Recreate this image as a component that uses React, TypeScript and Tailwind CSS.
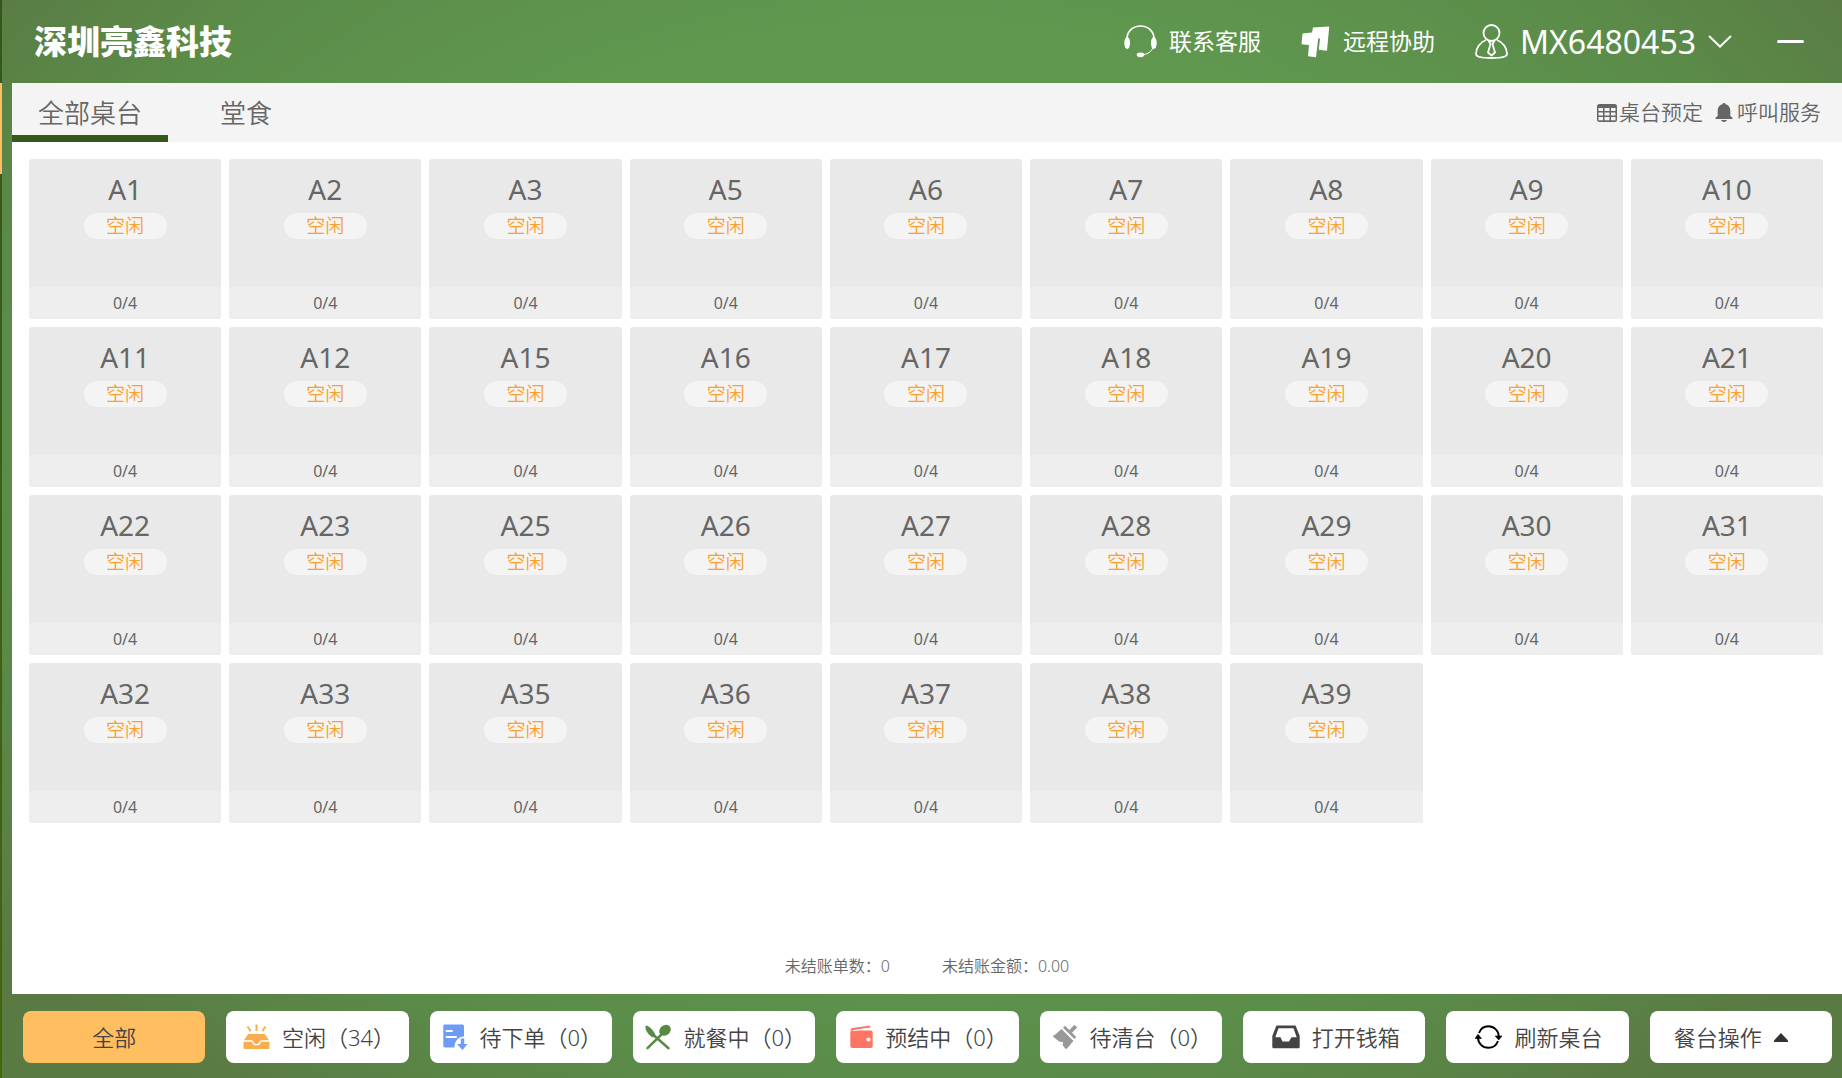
import React from 'react';

const tables = [
  'A1', 'A2', 'A3', 'A5', 'A6', 'A7', 'A8', 'A9', 'A10',
  'A11', 'A12', 'A15', 'A16', 'A17', 'A18', 'A19', 'A20', 'A21',
  'A22', 'A23', 'A25', 'A26', 'A27', 'A28', 'A29', 'A30', 'A31',
  'A32', 'A33', 'A35', 'A36', 'A37', 'A38', 'A39',
];

function HeadsetIcon() {
  return (
    <svg width="33" height="33" viewBox="0 0 33 33" fill="none" aria-hidden="true">
      <path d="M3 13C3.5 6 9 1 16.500 1S29.500 6 30 13" stroke="white" strokeWidth="1.700" />
      <ellipse cx="3.200" cy="18" rx="2.900" ry="6" fill="white" />
      <ellipse cx="29.800" cy="18" rx="2.900" ry="6" fill="white" />
      <path d="M29 23C27 27 24 29 19 29.800" stroke="white" strokeWidth="1" />
      <ellipse cx="16.500" cy="29.800" rx="3.800" ry="2.400" fill="white" />
    </svg>
  );
}

function RemoteIcon() {
  return (
    <svg width="29" height="32" viewBox="0 0 29 32" fill="white" aria-hidden="true">
      <path d="M1.500 7.500 11 6.500 12 1.500 28 .500 28.200 1 26 24.800 17.800 23.800 19 12.500 17.200 12.500 15 31.200 7 30.200 8 19 .5 18.300Z" />
    </svg>
  );
}

function UserIcon() {
  return (
    <svg width="33" height="35" viewBox="0 0 33 35" fill="none" stroke="white" strokeWidth="1.800" strokeLinejoin="round" aria-hidden="true">
      <circle cx="16.500" cy="9" r="8" />
      <path d="M11 16C5 18 1 24 1 30c0 3 7 4 15.500 4S32 33 32 30c0-6-4-12-10-14" />
      <path d="M13.500 16.500 15.500 20 13 28.500 16.500 31.500 20 28.500 17.500 20 19.500 16.500" />
    </svg>
  );
}

function GridIcon() {
  return (
    <svg width="20" height="18" viewBox="0 0 20 18" aria-hidden="true">
      <rect width="20" height="18" rx="2.500" fill="#666" />
      <g fill="#f4f4f4">
        <rect x="1.500" y="4" width="4.500" height="3" />
        <rect x="7.500" y="4" width="5" height="3" />
        <rect x="14" y="4" width="4.500" height="3" />
        <rect x="1.500" y="8.500" width="4.500" height="3" />
        <rect x="7.500" y="8.500" width="5" height="3" />
        <rect x="14" y="8.500" width="4.500" height="3" />
        <rect x="1.500" y="13" width="4.500" height="3.300" />
        <rect x="7.500" y="13" width="5" height="3.300" />
        <rect x="14" y="13" width="4.500" height="3.300" />
      </g>
    </svg>
  );
}

function BellIcon() {
  return (
    <svg width="18" height="19" viewBox="0 0 18 19" fill="#666" aria-hidden="true">
      <path d="M9 0c.9 0 1.500.6 1.600 1.300C13.500 2 15.300 4.400 15.300 7.500V13l2 1.500c.6.500.4 1.500-.4 1.500H1.100C.3 16 .1 15 .7 14.500l2-1.500V7.500C2.700 4.400 4.500 2 7.400 1.300 7.500.6 8.100 0 9 0Z" />
      <path d="M6 17h6c-.5 1.200-1.600 2-3 2s-2.500-.8-3-2Z" />
    </svg>
  );
}

function IdleIcon() {
  return (
    <svg width="27" height="26" viewBox="0 0 27 26" aria-hidden="true">
      <g stroke="#f8ae4f" strokeWidth="2">
        <path d="M13.500.500V7M4.500 2.500 7.700 7.200M22.500 2.500 19.300 7.200" />
      </g>
      <path d="M6.500 10h14c1 0 1.600.4 2.200 1.300l3.300 5c.5.700.5 1 .5 1.700v5.500c0 1-.6 1.500-1.500 1.500H2c-.9 0-1.500-.5-1.500-1.500V18c0-.7 0-1 .5-1.700l3.300-5C4.900 10.400 5.500 10 6.500 10Z" fill="#f8ae4f" />
      <path d="M0 17h8.700c.6 0 1 .4 1.100 1 .3 1.500 1.700 2.700 3.700 2.700s3.400-1.200 3.700-2.700c.1-.6.5-1 1.100-1H27" fill="none" stroke="white" strokeWidth="1.300" />
    </svg>
  );
}

function OrderIcon() {
  return (
    <svg width="25" height="26" viewBox="0 0 25 26" aria-hidden="true">
      <path d="M2 .5h17c1.400 0 2 .6 2 2v10C15.500 12.500 11.500 17 11.500 23.500H2C.9 23.500.3 22.900.3 21.800V2.200C.3 1.100.9.500 2 .5Z" fill="#6d9bf6" />
      <path d="M3.500 7H9M3.500 13H13" stroke="white" strokeWidth="2" strokeLinecap="round" />
      <path d="M17.800 14.500h3.400V20H24.500L19.500 26 14 20h3.800Z" fill="#6d9bf6" />
    </svg>
  );
}

function DiningIcon() {
  return (
    <svg width="26" height="26" viewBox="0 0 26 26" fill="#588a45" aria-hidden="true">
      <path d="M1 1.500C4 1.500 9 7 10.500 11L8 13.500C3 11 0 6 .5 2Z" />
      <path d="M9 11.500 23.500 24.200" stroke="#588a45" strokeWidth="2.500" strokeLinecap="round" />
      <path d="M2.500 24.200 17 10" stroke="#588a45" strokeWidth="2.500" strokeLinecap="round" />
      <ellipse cx="20" cy="6.300" rx="6.200" ry="5" transform="rotate(-38 20 6.300)" />
    </svg>
  );
}

function WalletIcon() {
  return (
    <svg width="23" height="24" viewBox="0 0 23 24" aria-hidden="true">
      <path d="M.3 5.500C.3 4 1.200 3.200 2.600 3L18.700.8c1.300-.2 1.900.3 1.900 1.500v.4L3 5.400Z" fill="#fe7566" />
      <rect x=".3" y="5.500" width="22.400" height="17.500" rx="2" fill="#fe7566" />
      <circle cx="18.500" cy="14.500" r="2.100" fill="white" />
      <path d="M3 5.600 20.800 2.900" stroke="white" strokeWidth=".9" />
    </svg>
  );
}

function CleanIcon() {
  return (
    <svg width="25" height="26" viewBox="0 0 25 26" fill="#999" aria-hidden="true">
      <path d="M.2 11.500C3.500 10.500 5 7.500 8.500 5L20.500 17c-2.500 2.200-4 5-6.500 7.500-.8.700-1.400.4-2-.3L9.800 21.500 10 18 6.500 17.800.2 12.800Z" />
      <path d="m10 3.700 2-2 4.300 4.300L21.500.8l2.700 2.700L19 8.700l4.300 4.200-2 2.200Z" />
    </svg>
  );
}

function DrawerIcon() {
  return (
    <svg width="28" height="24" viewBox="0 0 28 24" fillRule="evenodd" fill="#444" aria-hidden="true">
      <path d="M5.500.5h17c.8 0 1.200.3 1.500 1l3.700 9.500v10.500c0 1.300-.5 1.800-1.700 1.800H2c-1.200 0-1.700-.5-1.700-1.800V11L4 1.500c.3-.7.7-1 1.500-1ZM6.500 3.300 3.300 12.300H8.500L10.500 16.500h6.500L19.500 12.300H24.700L21.500 3.300Z" />
    </svg>
  );
}

function RefreshIcon() {
  return (
    <svg width="27" height="24" viewBox="0 0 27 24" aria-hidden="true">
      <path d="M4 8C5.500 3.800 9 1.200 13.300 1.200 19 1.200 23.600 5.500 23.800 11.500M23 16c-1.500 4.200-5.400 6.800-9.700 6.800C7.500 22.800 3 18.500 3 12.500" fill="none" stroke="black" strokeWidth="1.900" />
      <path d="M20.200 11H27L23.700 15Z M0 13.500H6.500L3 9.300Z" fill="black" stroke="black" strokeWidth=".6" />
    </svg>
  );
}

const actions = [
  { label: '空闲（34）', icon: <IdleIcon /> },
  { label: '待下单（0）', icon: <OrderIcon /> },
  { label: '就餐中（0）', icon: <DiningIcon /> },
  { label: '预结中（0）', icon: <WalletIcon /> },
  { label: '待清台（0）', icon: <CleanIcon /> },
  { label: '打开钱箱', icon: <DrawerIcon /> },
  { label: '刷新桌台', icon: <RefreshIcon /> },
];

function TableCard({ name }: { name: string }) {
  return (
    <button className="flex h-40 flex-col items-center overflow-hidden rounded-[3px] bg-[#e9e9e9] text-[#666]">
      <span className="mt-[11px] text-[28px] leading-[38px]">{name}</span>
      <span className="mt-[5px] flex h-[26px] w-[83px] items-center justify-center rounded-full bg-[#f4f4f4] text-[19px] leading-[26px] font-[350] text-[#f8a030]">
        空闲
      </span>
      <span className="mt-auto h-8 w-full bg-[#eee] text-center text-base leading-8">0/4</span>
    </button>
  );
}

export default function App() {
  return (
    <div className="flex min-h-screen bg-[radial-gradient(ellipse_at_50%_42%,#60a052_0%,#5f974f_50%,#5b8b49_72%,#5a7a43_90%)] font-['Noto_Sans','Noto_Sans_CJK_SC',sans-serif]">
      <aside className="flex w-[2px] shrink-0 flex-col bg-linear-to-b from-[#34581c] to-[#426808]">
        <div className="mt-[83px] h-[91px] bg-[#ffbe60]" />
      </aside>
      <div className="flex min-w-0 flex-1 flex-col">
        <header className="flex h-[83px] items-center justify-between pr-[38px] pl-8 text-white">
          <h1 className="text-[33px] leading-[44px] font-black">深圳亮鑫科技</h1>
          <div className="flex items-center">
            <button className="flex items-center gap-3 text-[23px]">
              <HeadsetIcon />
              联系客服
            </button>
            <button className="ml-10 flex items-center gap-[13px] text-[23px]">
              <RemoteIcon />
              远程协助
            </button>
            <button className="ml-10 flex items-center gap-3 text-[32px] leading-[44px]">
              <UserIcon />
              MX6480453
              <svg width="24" height="13" viewBox="0 0 24 13" fill="none" stroke="white" strokeWidth="2" aria-hidden="true">
                <path d="M1 1 12 11.500 23 1" />
              </svg>
            </button>
            <button aria-label="最小化" className="ml-[45px] flex h-8 items-center">
              <span className="h-[3px] w-[27px] rounded-full bg-white" />
            </button>
          </div>
        </header>

        <main className="ml-[10px] flex flex-1 flex-col bg-white text-[#666]">
          <nav className="flex h-[59px] items-stretch bg-[#f4f4f4] font-[350]">
            <button className="w-[156px] border-b-[7px] border-[#335a17] pt-2 text-[26px]">全部桌台</button>
            <button className="w-[156px] border-b-[7px] border-transparent pt-2 text-[26px]">堂食</button>
            <div className="mr-[21px] ml-auto flex items-center gap-3 text-[21px]">
              <button className="flex items-center gap-[2px]">
                <GridIcon />
                桌台预定
              </button>
              <button className="flex items-center gap-1">
                <BellIcon />
                呼叫服务
              </button>
            </div>
          </nav>
          <section className="mt-[17px] mr-[19px] ml-[17px] grid grid-cols-9 gap-2">
            {tables.map((name) => (
              <TableCard key={name} name={name} />
            ))}
          </section>
          <div className="mt-auto flex justify-center gap-[52px] pb-4 text-base leading-6 font-[350]">
            <p>未结账单数：0</p>
            <p>未结账金额：0.00</p>
          </div>
        </main>

        <footer className="grid h-[84px] grid-cols-9 gap-[21px] pt-[17px] pr-[10px] pb-[15px] pl-[21px] text-[22px] font-[350] text-[#444]">
          <button className="rounded-lg bg-[#ffbe60]">全部</button>
          {actions.map((action) => (
            <button key={action.label} className="flex items-center justify-center gap-3 rounded-lg bg-white pl-[3px] whitespace-nowrap">
              {action.icon}
              {action.label}
            </button>
          ))}
          <button className="flex items-center justify-center gap-3 rounded-lg bg-white pr-5 whitespace-nowrap">
            餐台操作
            <svg width="14" height="9" viewBox="0 0 14 9" fill="#333" aria-hidden="true">
              <path d="M7 0 14 7.500V9H0V7.500Z" />
            </svg>
          </button>
        </footer>
      </div>
    </div>
  );
}
